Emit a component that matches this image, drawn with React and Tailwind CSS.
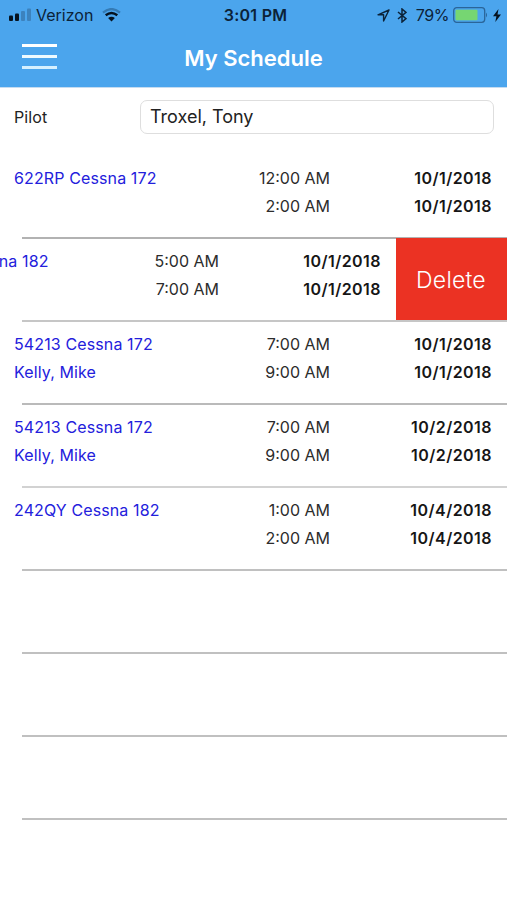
import React from "react";

const rows = [
  { plane: "622RP Cessna 172", times: ["12:00 AM", "2:00 AM"], date: "10/1/2018", line: "bg-[#b2b2b2]" },
  { plane: "242QY Cessna 182", times: ["5:00 AM", "7:00 AM"], date: "10/1/2018", swiped: true, line: "bg-[#c6c6c6]" },
  { plane: "54213 Cessna 172", person: "Kelly, Mike", times: ["7:00 AM", "9:00 AM"], date: "10/1/2018", line: "bg-[#bababa]" },
  { plane: "54213 Cessna 172", person: "Kelly, Mike", times: ["7:00 AM", "9:00 AM"], date: "10/2/2018", line: "bg-[#d2d2d2]" },
  { plane: "242QY Cessna 182", times: ["1:00 AM", "2:00 AM"], date: "10/4/2018", line: "bg-[#c0c0c0]" },
  { line: "bg-[#c0c0c0]" },
  { line: "bg-[#c0c0c0]" },
  { line: "bg-[#c0c0c0]" },
];

function StatusBar() {
  return (
    <div className="flex h-[30px] items-center pl-2 pr-[6px] text-[#0b2238]">
      <div className="flex flex-1 items-center">
        <svg width="24" height="14" viewBox="0 0 24 14">
          <rect x="1" y="7.5" width="4" height="5.5" rx="1" fill="#061320" />
          <rect x="7" y="5.5" width="4" height="7.5" rx="1" fill="#061320" />
          <rect x="13" y="3" width="4" height="10" rx="1" fill="#3c82bd" />
          <rect x="19" y="0.5" width="4" height="12.5" rx="1" fill="#3c82bd" />
        </svg>
        <span className="ml-1 w-[57px] whitespace-nowrap text-[16px] leading-5">Verizon</span>
        <svg className="ml-[9px]" width="19" height="14" viewBox="0 0 19 14" fill="none">
          <path d="M1 4.6Q9.5 -2.4 18 4.6" stroke="#347bb5" strokeWidth="2.3" />
          <path d="M3.7 7.3Q9.5 2.6 15.3 7.3" stroke="#061320" strokeWidth="2.4" />
          <path d="M6.1 10.1Q9.5 7.2 12.9 10.1L9.5 13.5Z" fill="#061320" />
        </svg>
      </div>
      <span className="pl-[2px] text-[16px] font-semibold leading-5 tracking-[0.25px]">3:01 PM</span>
      <div className="flex flex-1 items-center justify-end">
        <svg width="13" height="13" viewBox="0 0 13 13" fill="none" stroke="#0b2238" strokeWidth="1.4" strokeLinejoin="round">
          <path d="M12 1L1 5.8H6.6V12Z" />
        </svg>
        <svg className="ml-[7px]" width="10" height="15" viewBox="0 0 10 15" fill="none" stroke="#0b2238" strokeWidth="1.5">
          <path d="M1 4L9 10.7L5 14V1L9 4.3L1 11" />
        </svg>
        <span className="ml-[9px] text-[16px] leading-5 tracking-[-0.4px]">79%</span>
        <svg className="ml-[4px] mr-px" width="35" height="16" viewBox="0 0 35 16">
          <rect x="0.7" y="0.7" width="31" height="14.6" rx="3" fill="none" stroke="#2a6599" strokeWidth="1.3" />
          <rect x="2.5" y="2.7" width="22" height="10.6" rx="1" fill="#76d672" />
          <path d="M33 5.5Q35 8 33 10.5Z" fill="#2a6599" />
        </svg>
        <svg className="ml-[4px]" width="8" height="13" viewBox="0 0 8 13">
          <path d="M5.5 0L0 7.3H3.4L2.3 13L8 5.5H4.5Z" fill="#061320" />
        </svg>
      </div>
    </div>
  );
}

function Row({ row }) {
  return (
    <div className="flex h-[83px] flex-col">
      <div className="flex h-[82px] shrink-0 justify-end overflow-hidden">
        <div className="flex w-[507px] shrink-0 pl-[14px] pr-[15px] pt-[10px] text-[16px] leading-[27.7px]">
          <div className="flex w-[190px] flex-col whitespace-nowrap tracking-[0.12px] text-[#2320dc]">
            <span>{row.plane}</span>
            <span>{row.person}</span>
          </div>
          <div className="flex w-[126px] flex-col items-end text-[#2c2c2c]">
            {row.times?.map((t) => <span key={t}>{t}</span>)}
          </div>
          <div className="flex flex-1 flex-col items-end font-semibold tracking-[0.45px] text-[#161616]">
            <span>{row.date}</span>
            <span>{row.date}</span>
          </div>
        </div>
        {row.swiped && (
          <button className="flex w-[111px] shrink-0 items-center justify-center bg-[#eb3223] pr-px pt-[2px] text-[23px] font-light tracking-[0.2px] text-white">
            Delete
          </button>
        )}
      </div>
      <div className={`ml-[22px] h-[2px] shrink-0 ${row.line}`} />
    </div>
  );
}

export default function App() {
  return (
    <div className="h-[900px] w-[507px] overflow-hidden bg-white font-['Inter',sans-serif]">
      <header className="h-[88px] border-b border-[#c5dcf1] bg-[#4ba5ed]">
        <StatusBar />
        <div className="grid h-[55px] grid-cols-3 items-center">
          <div className="mb-[3px] ml-[22px] flex w-[35px] flex-col gap-2">
            <span className="h-[3px] bg-white" />
            <span className="h-[3px] bg-[#eefaff]" />
            <span className="h-[3px] bg-[#d5f0ff]" />
          </div>
          <h1 className="whitespace-nowrap pt-px text-center text-[22px] font-semibold text-white">My Schedule</h1>
        </div>
      </header>
      <div className="flex h-[67px] pt-3">
        <label className="w-[140px] pl-[14px] text-[16px] leading-[35px] tracking-[0.1px] text-[#222]">Pilot</label>
        <div className="h-[34px] w-[354px] rounded-[7px] border-[1.5px] border-[#dedede] pl-[9px] text-[18px] leading-[32px] text-[#222]">
          Troxel, Tony
        </div>
      </div>
      {rows.map((row, i) => <Row key={i} row={row} />)}
    </div>
  );
}
